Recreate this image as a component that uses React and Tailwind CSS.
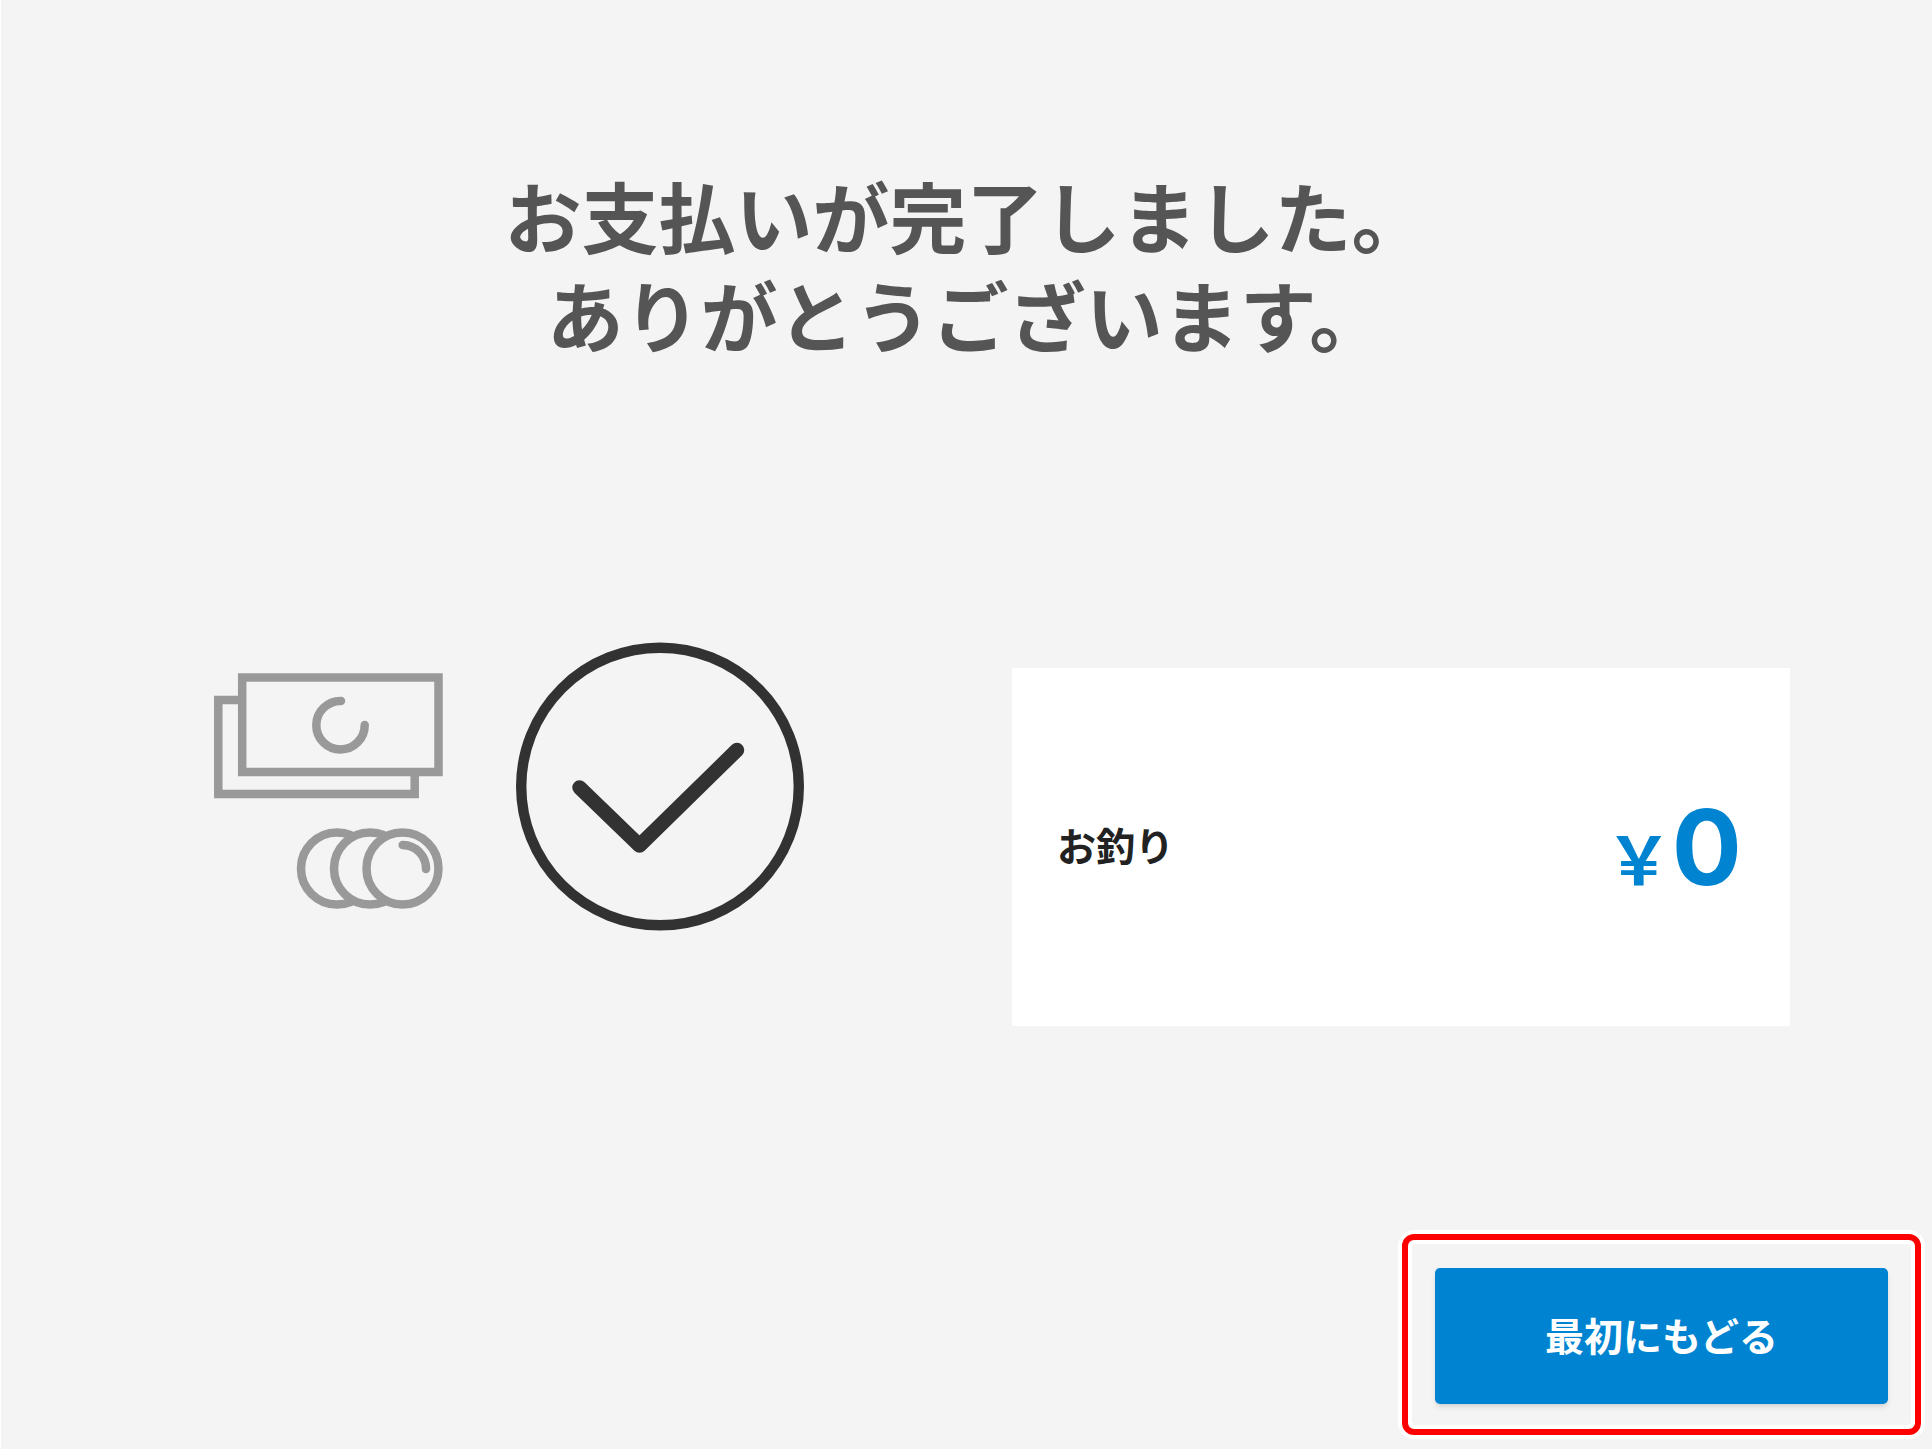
import React from 'react';

const CashIcon = () => (
    <svg width="229" height="236" viewBox="0 0 229 236" fill="none" stroke="#999999" strokeWidth="8.5" aria-hidden="true" className="shrink-0">
        <path d="M28 27H4.3V121H200.7V99" />
        <rect x="28.2" y="4.5" width="196.3" height="94.5" />
        <path d="M127 28A24.2 24.2 0 1 0 150.7 52" strokeLinecap="round" />
        <g fill="#f4f4f4">
            <circle cx="123" cy="195.5" r="36" />
            <circle cx="156" cy="195.5" r="36" />
            <circle cx="188.5" cy="195.5" r="36" />
        </g>
        <path d="M188.7 172A23.5 23.5 0 0 1 212 196" strokeLinecap="round" />
    </svg>
);

const DoneIcon = () => (
    <svg width="288" height="289" viewBox="0 0 288 289" fill="none" stroke="#323232" aria-hidden="true" className="shrink-0">
        <circle cx="144" cy="144.5" r="138.8" strokeWidth="10.4" />
        <path d="M63.5 145.5L123.5 203.5L221 108" strokeWidth="14.5" strokeLinecap="round" strokeLinejoin="round" />
    </svg>
);

const ChangeCard = ({ label, amount }) => (
    <section className="flex-1 h-[358px] mt-[26px] ml-[208px] pl-[45px] pr-12 bg-white flex items-center justify-between">
        <h2 className="text-[39px] leading-none font-bold text-[#222222]">{label}</h2>
        <p className="flex items-baseline font-['Inter','Noto_Sans_CJK_JP',sans-serif] leading-none text-[#0084d1]">
            <span className="text-[66px] font-bold">￥</span>
            <span className="text-[104px] font-bold">{amount}</span>
        </p>
    </section>
);

export default function App() {
    return (
        <div className="min-h-screen w-full flex flex-col bg-[#f4f4f4] border-l border-white font-['Liberation_Sans','Noto_Sans_CJK_JP',sans-serif]">
            <h1 className="pt-[172px] text-center text-[77px] leading-[99px] font-bold text-[#555555]">
                お支払いが完了しました。<br />
                ありがとうございます。
            </h1>

            <main className="flex items-start pt-[272px] pl-[213px] pr-[142px]">
                <div className="flex items-end gap-[73px]">
                    <div className="pb-[22px]">
                        <CashIcon />
                    </div>
                    <DoneIcon />
                </div>
                <ChangeCard label="お釣り" amount="0" />
            </main>

            <footer className="mt-auto flex justify-end pr-[7px] pb-[10px]">
                {/* highlighted action: red ring with a white edge on both sides */}
                <div className="rounded-2xl bg-white p-1">
                    <div className="rounded-xl border-6 border-[#ff0000] bg-white p-1">
                        <div className="rounded-sm bg-[#f4f4f4] px-[23px] pt-6 pb-[21px]">
                            <button type="button" className="block w-[453px] h-[136px] pt-1 rounded-[5px] bg-[#0084d1] text-[39px] font-bold text-white shadow-md">
                                最初にもどる
                            </button>
                        </div>
                    </div>
                </div>
            </footer>
        </div>
    );
}
